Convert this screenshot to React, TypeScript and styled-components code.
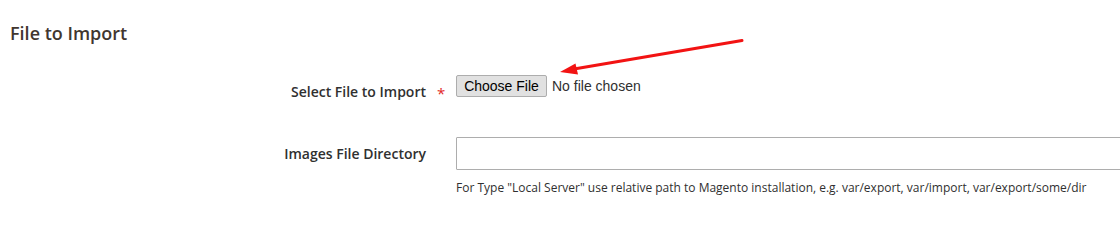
import { FC } from 'react';
import styled, { createGlobalStyle } from 'styled-components';

const GlobalStyle = createGlobalStyle`
  html, body {
    margin: 0;
    padding: 0;
    background: #ffffff;
    overflow: hidden;
  }
  body {
    font-family: 'Open Sans', 'Liberation Sans', sans-serif;
    color: #303030;
  }
`;

const StyledPage = styled.div`
  position: relative;
  width: 1120px;
  height: 249px;
  overflow: hidden;
  padding: 23px 0 0 10px;
  box-sizing: border-box;
`;

const StyledTitle = styled.h2`
  margin: 0;
  font-size: 18px;
  line-height: 20px;
  font-weight: 600;
  color: #41362f;
`;

const StyledForm = styled.div`
  display: grid;
  grid-template-columns: 446px 700px;
  row-gap: 29px;
  margin-top: 32px;
`;

const StyledLabelCell = styled.div`
  display: flex;
  justify-content: flex-end;
  align-items: center;
  height: 33px;
  font-size: 14px;
  font-weight: 600;
  color: #303030;
`;

const StyledRequired = styled.span`
  display: inline-block;
  width: 30px;
  box-sizing: border-box;
  padding-left: 11px;
  color: #e22626;
  font-size: 15px;
  font-weight: 400;
  line-height: 1;
  transform: translateY(2px);
`;

const StyledControl = styled.div`
  display: flex;
  flex-direction: column;
  align-items: flex-start;
`;

const StyledFileRow = styled.div`
  display: flex;
  align-items: center;
  height: 22px;
  font-family: 'Liberation Sans', Arial, sans-serif;
  font-size: 14px;
`;

const StyledFileButton = styled.button`
  height: 22px;
  width: 91px;
  padding: 0;
  margin: 0 5px 0 0;
  border: 1px solid #adadad;
  border-radius: 2px;
  background: #e1e1e1;
  color: #000000;
  font-family: 'Liberation Sans', Arial, sans-serif;
  font-size: 14px;
`;

const StyledFileStatus = styled.span`
  color: #303030;
`;

const StyledTextInput = styled.input`
  width: 700px;
  height: 33px;
  box-sizing: border-box;
  margin: 0;
  padding: 0 10px;
  border: 1px solid #adadad;
  border-radius: 1px;
  background: #ffffff;
  font-family: 'Open Sans', sans-serif;
  font-size: 14px;
`;

const StyledNote = styled.div`
  margin-top: 9px;
  font-size: 12px;
  line-height: 17px;
  color: #303030;
`;

const StyledArrow = styled.svg`
  position: absolute;
  left: 0;
  top: 0;
  pointer-events: none;
`;

const App: FC = () => {
  return (
    <StyledPage>
      <GlobalStyle />
      <StyledTitle>File to Import</StyledTitle>
      <StyledForm>
        <StyledLabelCell>
          <span>Select File to Import</span>
          <StyledRequired>*</StyledRequired>
        </StyledLabelCell>
        <StyledControl>
          <StyledFileRow>
            <StyledFileButton type="button">Choose File</StyledFileButton>
            <StyledFileStatus>No file chosen</StyledFileStatus>
          </StyledFileRow>
        </StyledControl>

        <StyledLabelCell>
          <span>Images File Directory</span>
          <StyledRequired />
        </StyledLabelCell>
        <StyledControl>
          <StyledTextInput type="text" />
          <StyledNote>
            For Type "Local Server" use relative path to Magento installation, e.g. var/export, var/import,
            var/export/some/dir
          </StyledNote>
        </StyledControl>
      </StyledForm>

      {/* annotation arrow pointing at the file button */}
      <StyledArrow width="1120" height="249" viewBox="0 0 1120 249">
        <line x1="742" y1="40.5" x2="574" y2="69" stroke="#f21313" strokeWidth="3" strokeLinecap="round" />
        <polygon points="560,72 575.5,63.5 578,74.5" fill="#f21313" />
      </StyledArrow>
    </StyledPage>
  );
};

export default App;
